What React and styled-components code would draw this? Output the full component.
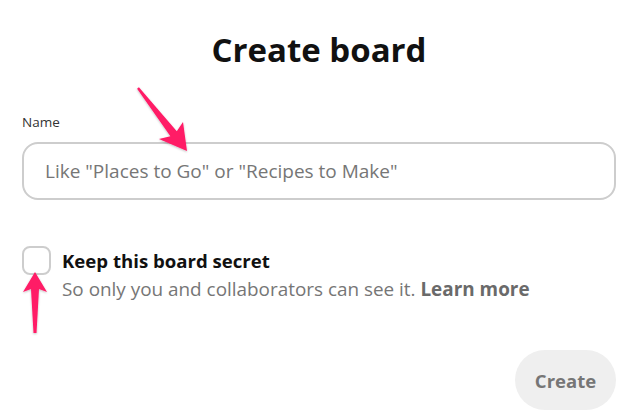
import React from "react";
import styled, { createGlobalStyle } from "styled-components";

const GlobalStyle = createGlobalStyle`
  body {
    margin: 0;
    background: #fff;
    font-family: "Open Sans", "Noto Sans", sans-serif;
  }
`;

const Page = styled.div`
  position: relative;
  width: 629px;
  height: 417px;
  box-sizing: border-box;
  padding: 28px 13px 0 22px;
  display: flex;
  flex-direction: column;
  overflow: hidden;
`;

const Title = styled.h1`
  margin: 0;
  text-align: center;
  font-size: 33px;
  line-height: 44px;
  font-weight: 700;
  color: #111;
`;

const Field = styled.div`
  display: flex;
  flex-direction: column;
  margin-top: 41px;
`;

const Label = styled.label`
  font-size: 13.5px;
  line-height: 18px;
  color: #333;
  margin-bottom: 11px;
`;

const Input = styled.input`
  box-sizing: border-box;
  height: 58px;
  width: 100%;
  border: 2px solid #cdcdcd;
  border-radius: 16px;
  padding: 0 21px;
  font-family: inherit;
  font-size: 19px;
  color: #111;
  outline: none;
  &::placeholder {
    color: #767676;
  }
`;

const CheckRow = styled.div`
  display: flex;
  gap: 11px;
  margin-top: 46px;
`;

const Box = styled.span`
  box-sizing: border-box;
  flex: none;
  width: 29px;
  height: 29px;
  border: 2px solid #cdcdcd;
  border-radius: 8px;
`;

const CheckText = styled.div`
  display: flex;
  flex-direction: column;
  padding-top: 1px;
`;

const CheckTitle = styled.div`
  font-size: 18.6px;
  line-height: 27px;
  font-weight: 700;
  color: #111;
`;

const CheckHint = styled.div`
  font-size: 18.9px;
  line-height: 27px;
  margin-top: 2px;
  color: #767676;
  b {
    color: #6a6a6a;
    font-weight: 700;
  }
`;

const Footer = styled.div`
  display: flex;
  justify-content: flex-end;
  margin-top: 47px;
`;

const Button = styled.button`
  width: 101px;
  height: 60px;
  border: none;
  border-radius: 30px;
  background: #efefef;
  color: #767676;
  font-family: inherit;
  font-size: 18.5px;
  font-weight: 700;
`;

const Overlay = styled.svg`
  position: absolute;
  left: 0;
  top: 0;
  pointer-events: none;
`;

function Arrows() {
  return (
    <Overlay width="629" height="417" viewBox="0 0 629 417">
      <defs>
        <filter id="sh" x="-20%" y="-20%" width="140%" height="140%">
          <feDropShadow dx="0" dy="1" stdDeviation="1" floodColor="#000" floodOpacity="0.25" />
        </filter>
      </defs>
      <polygon
        filter="url(#sh)"
        fill="#ff1a66"
        points="138.9,87.3 176.8,131.2 183,122 187,151 159,139 170.4,136.2 137.1,88.7"
      />
      <polygon
        filter="url(#sh)"
        fill="#ff1a66"
        points="33.5,333 31,289 23,292 35,272 47,292 39,289 36.5,333"
      />
    </Overlay>
  );
}

export default function App() {
  return (
    <Page>
      <GlobalStyle />
      <Title>Create board</Title>
      <Field>
        <Label htmlFor="name">Name</Label>
        <Input id="name" placeholder={'Like "Places to Go" or "Recipes to Make"'} />
      </Field>
      <CheckRow>
        <Box />
        <CheckText>
          <CheckTitle>Keep this board secret</CheckTitle>
          <CheckHint>
            So only you and collaborators can see it. <b>Learn more</b>
          </CheckHint>
        </CheckText>
      </CheckRow>
      <Footer>
        <Button>Create</Button>
      </Footer>
      <Arrows />
    </Page>
  );
}
